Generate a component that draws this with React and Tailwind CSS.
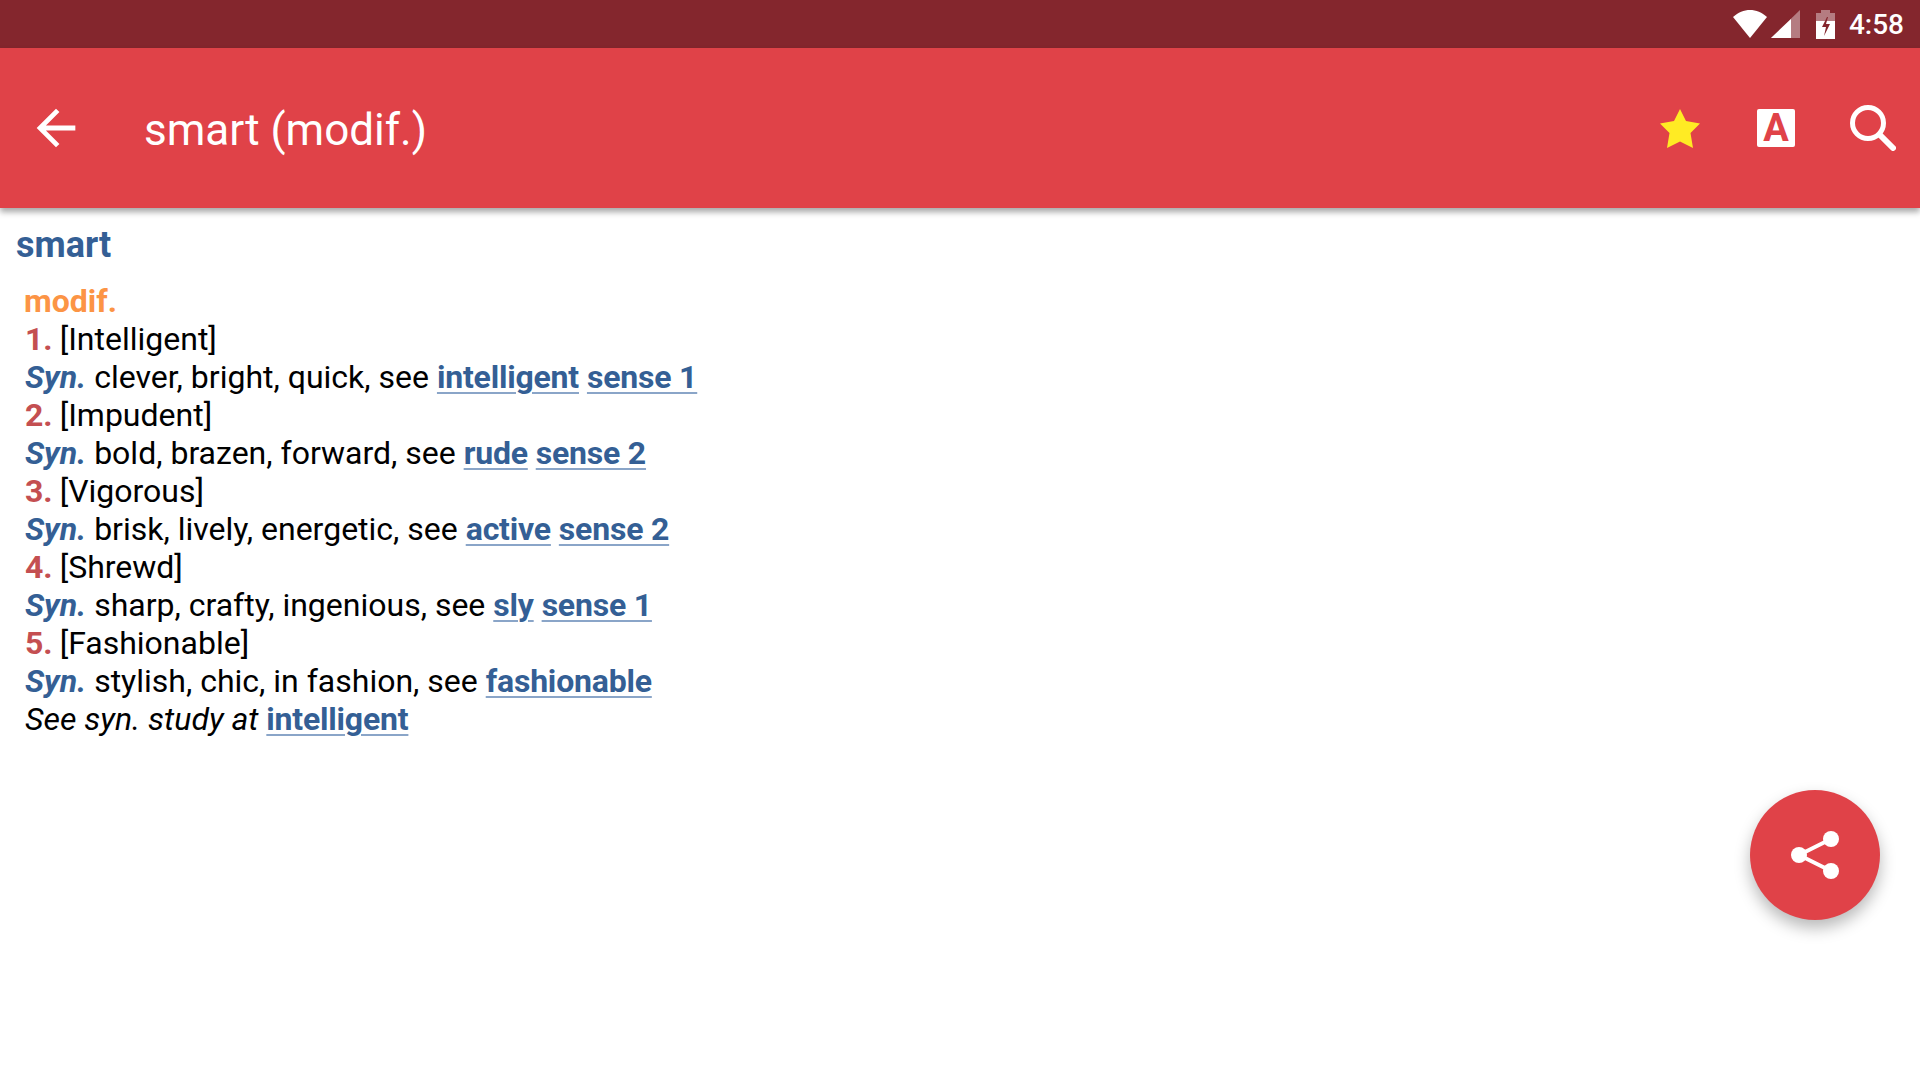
import React from 'react';

const font = { fontFamily: 'Roboto, sans-serif' };

const senses = [
  { num: '1.', label: '[Intelligent]', syn: 'clever, bright, quick, see', links: ['intelligent', 'sense 1'] },
  { num: '2.', label: '[Impudent]', syn: 'bold, brazen, forward, see', links: ['rude', 'sense 2'] },
  { num: '3.', label: '[Vigorous]', syn: 'brisk, lively, energetic, see', links: ['active', 'sense 2'] },
  { num: '4.', label: '[Shrewd]', syn: 'sharp, crafty, ingenious, see', links: ['sly', 'sense 1'] },
  { num: '5.', label: '[Fashionable]', syn: 'stylish, chic, in fashion, see', links: ['fashionable'] },
];

function EntryLink({ children }) {
  return <a className="font-bold tracking-[-0.2px] text-[#345f95] underline decoration-[#8aa5c8] decoration-2 underline-offset-[4px]">{children}</a>;
}

function StatusBar() {
  return (
    <div className="h-12 bg-[#84262d] flex items-center justify-end pr-[16px] text-white">
      <svg width="34" height="28" viewBox="0 0 34 28" className="mr-1">
        <path d="M17 28L0 7C5 2.5 11 0 17 0s12 2.5 17 7z" fill="#fff" />
      </svg>
      <svg width="29" height="28" viewBox="0 0 29 28">
        <path d="M29 0v28H0z" fill="#fff" fillOpacity=".4" />
        <path d="M20 9v19H0z" fill="#fff" />
      </svg>
      <svg width="19" height="29" viewBox="0 0 19 29" className="ml-4 mr-[14px]">
        <path d="M5 0h9v3h5v8H0V3h5z" fill="#fff" fillOpacity=".4" />
        <path d="M0 11h19v18H0z" fill="#fff" />
        <path d="M11 7L6 17h4l-2 9 6-12h-4l2-7z" fill="#84262d" />
      </svg>
      <span className="text-[28px] font-medium leading-none pt-[2px]">4:58</span>
    </div>
  );
}

function Toolbar() {
  return (
    <div className="relative z-10 h-40 bg-[#e04248] flex items-center text-white shadow-[0_4px_6px_rgba(0,0,0,0.35)]">
      <svg width="58" height="58" viewBox="0 0 24 24" className="ml-[27px]" fill="#fff">
        <path d="M20 11H7.83l5.59-5.59L12 4l-8 8 8 8 1.41-1.41L7.83 13H20v-2z" />
      </svg>
      <span className="ml-[59px] pt-1 text-[44px] leading-none">smart (modif.)</span>
      <div className="ml-auto mr-[24px] flex items-center">
        <svg width="40" height="39" viewBox="0 0 40 39">
          <path d="M20 0l6 12 14 2.500-9.500 9.500 2.500 15-13-6.500-13 6.500 2.500-15L0 14.500 14 12z" fill="#ffeb24" />
        </svg>
        <div className="ml-[57px] w-[38px] h-[38px] rounded-[2px] bg-white flex items-center justify-center text-[#e04248] text-[38px] font-bold leading-none">A</div>
        <svg width="46" height="46" viewBox="0 0 46 46" className="ml-[55px]" fill="none" stroke="#fff">
          <circle cx="18" cy="18" r="15.5" strokeWidth="5" />
          <path d="M30 30l13 13" strokeWidth="6" strokeLinecap="round" />
        </svg>
      </div>
    </div>
  );
}

export default function App() {
  return (
    <div className="relative min-h-[1080px] bg-white overflow-hidden" style={font}>
      <StatusBar />
      <Toolbar />

      <div className="pl-4 pt-[11px]">
        <h1 className="text-[36px] leading-[52px] font-bold text-[#345f95]">smart</h1>
        <div className="pl-[9px] pt-[11px] text-[32px] leading-[38px] text-black">
          <div className="-ml-[1px] font-bold text-[#fc9445]">modif.</div>
          {senses.map((s) => (
            <div key={s.num}>
              <div>
                <span className="font-bold text-[#c44f51] mr-[7px]">{s.num}</span>
                {s.label}
              </div>
              <div>
                <span className="font-bold italic text-[#345f95] mr-2">Syn.</span>
                {s.syn}{' '}
                {s.links.map((l, i) => (
                  <React.Fragment key={l}>
                    {i > 0 && ' '}
                    <EntryLink>{l}</EntryLink>
                  </React.Fragment>
                ))}
              </div>
            </div>
          ))}
          <div>
            <span className="italic">See syn. study at </span>
            <EntryLink>intelligent</EntryLink>
          </div>
        </div>
      </div>

      {/* share fab */}
      <div className="absolute left-[1750px] top-[790px] w-[130px] h-[130px] rounded-full bg-[#e04248] flex items-center justify-center shadow-[0_8px_16px_rgba(0,0,0,0.28)]">
        <svg width="50" height="50" viewBox="0 0 50 50" fill="#fff" stroke="#fff">
          <path d="M9 25l32-16M9 25l32 16" strokeWidth="4" fill="none" />
          <circle cx="9" cy="25" r="8" stroke="none" />
          <circle cx="41" cy="9" r="8" stroke="none" />
          <circle cx="41" cy="41" r="8" stroke="none" />
        </svg>
      </div>
    </div>
  );
}
